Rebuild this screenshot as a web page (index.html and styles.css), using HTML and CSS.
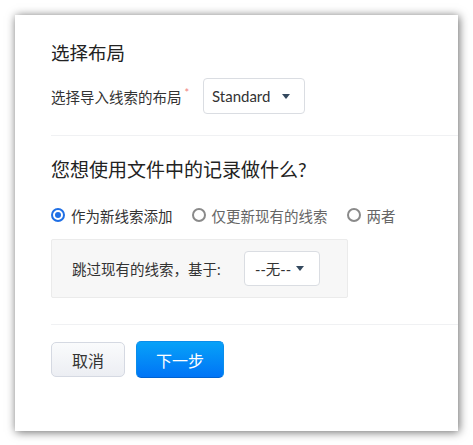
FILE: index.html
```html
<!DOCTYPE html>
<html lang="zh">
<head>
    <meta charset="UTF-8">
    <title>导入线索</title>
    <link rel="stylesheet" href="styles.css">
</head>
<body>
    <div class="dialog">
        <h2 class="title">选择布局</h2>
        <div class="field-row">
            <label class="field-label">选择导入线索的布局<span class="required">*</span></label>
            <div class="select select-layout">
                <span>Standard</span>
                <span class="caret"></span>
            </div>
        </div>

        <div class="divider"></div>

        <h2 class="question">您想使用文件中的记录做什么?</h2>
        <div class="radio-group">
            <label class="radio checked"><span class="radio-dot"></span>作为新线索添加</label>
            <label class="radio"><span class="radio-dot"></span>仅更新现有的线索</label>
            <label class="radio"><span class="radio-dot"></span>两者</label>
        </div>

        <div class="skip-box">
            <span class="skip-label">跳过现有的线索，基于:</span>
            <div class="select select-none">
                <span>--无--</span>
                <span class="caret"></span>
            </div>
        </div>

        <div class="divider divider-bottom"></div>

        <div class="actions">
            <button class="btn btn-cancel">取消</button>
            <button class="btn btn-next">下一步</button>
        </div>
    </div>
</body>
</html>
```

FILE: styles.css
```css
* {
    margin: 0;
    padding: 0;
    box-sizing: border-box;
    font-family: Lato, 'Noto Sans CJK SC', sans-serif;
}

body {
    background: #FFFFFF;
    color: #333;
    padding: 15px;
    width: 473px;
    height: 445px;
}

.dialog {
    width: 443px;
    height: 416px;
    background: #FFFFFF;
    padding-top: 26px;
    padding-left: 36px;
    box-shadow: 1px 1px 9px rgba(0, 0, 0, 0.6);
}

.title {
    font-size: 18.5px;
    font-weight: 400;
    line-height: 24px;
    color: #222;
    margin-bottom: 13px;
}

.field-row {
    display: flex;
    align-items: center;
    height: 36px;
}

.field-label {
    font-size: 14.5px;
    color: #333;
    width: 152px;
}

.required {
    color: #F08080;
    font-size: 11px;
    margin-left: 3px;
    vertical-align: top;
}

.select {
    display: flex;
    align-items: center;
    justify-content: space-between;
    border: 1px solid #DADDE2;
    border-radius: 4px;
    background: #FFFFFF;
    font-size: 15px;
    color: #333;
}

.select-layout {
    width: 102px;
    height: 36px;
    padding: 0 14px 0 8px;
}

.select-none {
    width: 76px;
    height: 35px;
    padding: 0 15px 0 10px;
    font-size: 14.5px;
}

.caret {
    width: 0;
    height: 0;
    border-left: 4px solid transparent;
    border-right: 4px solid transparent;
    border-top: 5px solid #34495E;
}

.divider {
    height: 1px;
    background: #F0F1F3;
    margin-top: 21px;
}

.question {
    font-size: 19px;
    font-weight: 400;
    line-height: 28px;
    color: #222;
    margin-top: 20px;
}

.radio-group {
    display: flex;
    align-items: center;
    margin-top: 21px;
    height: 20px;
}

.radio {
    display: flex;
    align-items: center;
    font-size: 14.5px;
    color: #666;
    margin-right: 19px;
}

.radio.checked {
    color: #333;
}

.radio-dot {
    width: 14px;
    height: 14px;
    border: 2px solid #8A8A8A;
    border-radius: 50%;
    margin-right: 6px;
    display: flex;
    align-items: center;
    justify-content: center;
}

.radio.checked .radio-dot {
    border-color: #1F6FE5;
}

.radio.checked .radio-dot::after {
    content: '';
    width: 6px;
    height: 6px;
    border-radius: 50%;
    background: #1F6FE5;
}

.skip-box {
    display: flex;
    align-items: center;
    width: 297px;
    height: 59px;
    margin-top: 14px;
    padding: 0 20px;
    background: #F7F7F7;
    border: 1px solid #EBEBEB;
    border-radius: 2px;
}

.skip-label {
    font-size: 14.5px;
    color: #333;
    width: 172px;
}

.divider-bottom {
    margin-top: 26px;
}

.actions {
    display: flex;
    align-items: center;
    gap: 11px;
    margin-top: 16px;
}

.btn {
    font-size: 16px;
    border-radius: 5px;
    cursor: pointer;
}

.btn-cancel {
    width: 74px;
    height: 35px;
    color: #333;
    background: linear-gradient(180deg, #FAFBFC 0%, #ECEEF3 100%);
    border: 1px solid #D5D9E2;
}

.btn-next {
    width: 88px;
    height: 37px;
    color: #FFFFFF;
    background: linear-gradient(180deg, #07A2F8 0%, #0074F6 100%);
    border: 1px solid #0A8DEB;
    border-bottom-color: #0062D0;
}
```
